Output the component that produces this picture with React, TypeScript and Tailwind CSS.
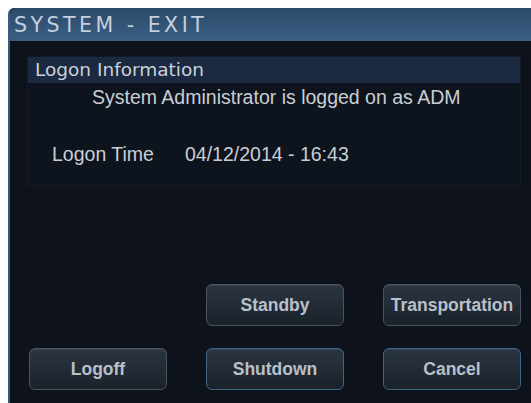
import React from "react";

type BtnProps = {
  label: string;
  active?: boolean;
};

const DialogButton = ({ label, active }: BtnProps) => (
  <button
    className={`h-[42px] w-[138px] rounded-md border bg-gradient-to-b from-[#2b3541] to-[#1a212b] text-[17.5px] font-bold text-[#b8c0c9] shadow-[inset_0_1px_0_rgba(255,255,255,0.08)] ${
      active ? "border-[#3f6589]" : "border-[#4a535e]"
    }`}
    style={{ fontFamily: '"Liberation Sans", Arial, sans-serif' }}
  >
    {label}
  </button>
);

const App = () => {
  return (
    <div className="w-[531px] h-[403px] bg-white pl-2 pt-2 overflow-hidden">
      <div className="flex h-full w-full flex-col rounded-tl-md border-l-2 border-[#3a5b80] bg-[#0d121b]">
        {/* title bar */}
        <div
          className="flex h-[34px] items-center rounded-tl-md border-b border-[#0a0f16] bg-gradient-to-b from-[#2c4a6a] to-[#3a5f84] pl-1 pt-[2px] text-[20.5px] tracking-[3.5px] text-[#c5d0dc]"
          style={{ fontFamily: '"DejaVu Sans", "Noto Sans", sans-serif' }}
        >
          SYSTEM - EXIT
        </div>

        <div className="flex flex-1 flex-col pl-[17px] pr-[2px] pt-[14px] pb-[13px]">
          {/* logon panel */}
          <div className="w-[494px] border border-[#141b26] bg-[#0e141d]">
            <div
              className="flex h-[26px] items-center bg-[#1b2a40] pl-[7px] text-[18.5px] text-[#c9d1da]"
              style={{ fontFamily: '"DejaVu Sans", "Noto Sans", sans-serif' }}
            >
              Logon Information
            </div>
            <div
              className="text-[19.5px] leading-[22px] text-[#c9ced4]"
              style={{ fontFamily: '"Liberation Sans", Arial, sans-serif' }}
            >
              <div className="pt-[3px] pl-[64px]">
                System Administrator is logged on as ADM
              </div>
              <div className="flex pl-[24px] pt-[35px] pb-[20px]">
                <span className="w-[133px]">Logon Time</span>
                <span>04/12/2014 - 16:43</span>
              </div>
            </div>
          </div>

          {/* actions */}
          <div className="mt-auto grid grid-cols-[138px_138px_138px] gap-x-[39px] gap-y-[22px] pl-[2px]">
            <div />
            <DialogButton label="Standby" />
            <DialogButton label="Transportation" />
            <DialogButton label="Logoff" />
            <DialogButton label="Shutdown" active />
            <DialogButton label="Cancel" active />
          </div>
        </div>
      </div>
    </div>
  );
};

export default App;
